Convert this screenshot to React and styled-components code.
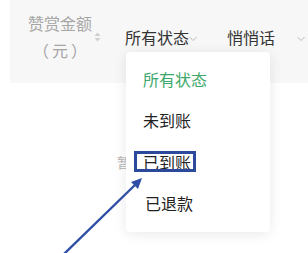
import React from "react";
import styled, { createGlobalStyle } from "styled-components";

const Global = createGlobalStyle`
  html, body { margin: 0; padding: 0; background: #fff; }
  body { font-family: "Noto Sans CJK SC", "Noto Sans", sans-serif; }
`;

const Page = styled.div`
  position: relative;
  width: 308px;
  height: 253px;
  overflow: hidden;
  padding-left: 10px;
  box-sizing: border-box;
`;

const Header = styled.div`
  display: flex;
  align-items: center;
  height: 74px;
  padding-bottom: 9px;
  background: #f7f7f7;
`;

const Column = styled.div`
  display: flex;
  align-items: center;
  width: ${(p) => p.$w}px;
  padding-left: ${(p) => p.$pl || 0}px;
  box-sizing: border-box;
  flex: ${(p) => (p.$grow ? 1 : "none")};
`;

const HeadText = styled.div`
  font-size: 16px;
  line-height: 27px;
  color: ${(p) => (p.$muted ? "#a6a6a6" : "#333")};
  text-align: center;
  white-space: nowrap;
`;

const Unit = styled.span`
  letter-spacing: 3px;
  padding-left: 3px;
`;

const Caret = styled.svg`
  margin-left: ${(p) => p.$ml || 0}px;
  margin-top: 4px;
  flex: none;
`;

const SortIcon = styled.svg`
  margin-left: 2px;
  flex: none;
`;

const Body = styled.div`
  padding-top: 69px;
  padding-left: 107px;
`;

const EmptyText = styled.div`
  font-size: 14px;
  line-height: 20px;
  color: #b5b5b5;
`;

const Dropdown = styled.div`
  position: absolute;
  left: 126px;
  top: 52px;
  width: 144px;
  height: 180px;
  padding-top: 6px;
  box-sizing: border-box;
  background: #fff;
  border-radius: 4px;
  box-shadow: 0 2px 14px rgba(0, 0, 0, 0.09);
  display: flex;
  flex-direction: column;
`;

const Item = styled.div`
  height: 41.5px;
  display: flex;
  align-items: center;
  padding-left: ${(p) => (p.$shift ? 19 : 17)}px;
  font-size: 16px;
  color: ${(p) => (p.$active ? "#3da86a" : "#222")};
`;

const Highlight = styled.div`
  position: absolute;
  left: 134px;
  top: 151px;
  width: 62px;
  height: 21px;
  box-sizing: border-box;
  border: 3px solid #2c4a9c;
`;

const ArrowLayer = styled.svg`
  position: absolute;
  left: 0;
  top: 0;
  pointer-events: none;
`;

const Chevron = ({ ml }) => (
  <Caret $ml={ml} width="8" height="6" viewBox="0 0 8 6">
    <path d="M0.5 1 L4 4.5 L7.5 1" fill="none" stroke="#b8b8b8" strokeWidth="1" />
  </Caret>
);

export default function App() {
  return (
    <>
      <Global />
      <Page>
        <Header>
          <Column $w={115} $pl={18}>
            <HeadText $muted>
              赞赏金额
              <br />
              <Unit>（元）</Unit>
            </HeadText>
            <SortIcon width="7" height="10" viewBox="0 0 7 10">
              <path d="M3.5 0.5 L6.5 4 L0.5 4 Z" fill="#d0d0d0" />
              <path d="M3.5 9.5 L6.5 6 L0.5 6 Z" fill="#d0d0d0" />
            </SortIcon>
          </Column>
          <Column $w={102}>
            <HeadText>所有状态</HeadText>
            <Chevron ml={0} />
          </Column>
          <Column $grow>
            <HeadText>悄悄话</HeadText>
            <Chevron ml={22} />
          </Column>
        </Header>
        <Body>
          <EmptyText>暂无数据</EmptyText>
        </Body>
        <Dropdown>
          <Item $active>所有状态</Item>
          <Item>未到账</Item>
          <Item>已到账</Item>
          <Item $shift>已退款</Item>
        </Dropdown>
        <Highlight />
        <ArrowLayer width="308" height="253" viewBox="0 0 308 253">
          <line x1="64" y1="254" x2="136" y2="184" stroke="#2f4fa6" strokeWidth="2.4" />
          <polygon points="142,178 131,182 138,189" fill="#2f4fa6" />
        </ArrowLayer>
      </Page>
    </>
  );
}
